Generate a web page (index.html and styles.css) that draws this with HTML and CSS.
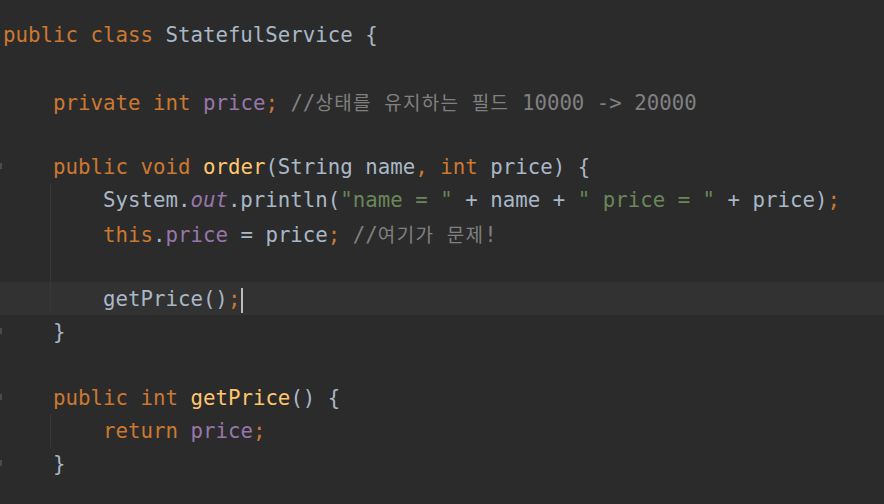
FILE: index.html
```html
<!DOCTYPE html>
<html lang="ko">
<head>
<meta charset="utf-8">
<title>StatefulService</title>
<link rel="stylesheet" href="styles.css">
</head>
<body>
<main class="editor">
<div class="line"><span class="kw">public class</span> StatefulService {</div>
<div class="line"></div>
<div class="line">    <span class="kw">private int</span> <span class="fld">price</span><span class="kw">;</span> <span class="cm">//<span class="ko">상태를</span> <span class="ko">유지하는</span> <span class="ko">필드</span> 10000 -&gt; 20000</span></div>
<div class="line"></div>
<div class="line fold">    <span class="kw">public void</span> <span class="fn">order</span>(String name<span class="kw">,</span> <span class="kw">int</span> price) {</div>
<div class="block">
<div class="line">        System.<span class="fld it">out</span>.println(<span class="str">"name = "</span> + name + <span class="str">" price = "</span> + price)<span class="kw">;</span></div>
<div class="line">        <span class="kw">this</span>.<span class="fld">price</span> = price<span class="kw">;</span> <span class="cm">//<span class="ko">여기가</span> <span class="ko">문제</span>!</span></div>
<div class="line"></div>
<div class="line current">        getPrice()<span class="kw">;</span><span class="caret"></span></div>
</div>
<div class="line fold">    }</div>
<div class="line"></div>
<div class="line fold">    <span class="kw">public int</span> <span class="fn">getPrice</span>() {</div>
<div class="block">
<div class="line">        <span class="kw">return</span> <span class="fld">price</span><span class="kw">;</span></div>
</div>
<div class="line fold">    }</div>
</main>
</body>
</html>
```
FILE: styles.css
```css
html, body {
  margin: 0;
  padding: 0;
  background: #2b2b2b;
}

.editor {
  width: 884px;
  height: 504px;
  overflow: hidden;
  padding-top: 18px;
  box-sizing: border-box;
  font-family: "DejaVu Sans Mono", "Liberation Mono", "Noto Sans CJK KR", monospace;
  font-size: 20.76px;
  color: #a9b7c6;
}

.line {
  position: relative;
  height: 33px;
  line-height: 35px;
  padding-left: 3px;
  white-space: pre;
}

.line.current {
  background: #323232;
}

.block {
  position: relative;
}

.block::before {
  content: "";
  position: absolute;
  left: 50px;
  top: 0;
  bottom: 0;
  width: 1px;
  background: #383838;
  z-index: 1;
}

.fold::before {
  content: "";
  position: absolute;
  left: 0;
  top: 13px;
  width: 2px;
  height: 6px;
  background: #4b4b4b;
}

.kw { color: #cc7832; }
.fn { color: #ffc66d; }
.fld { color: #9876aa; }
.it { font-style: italic; }
.str { color: #6a8759; }
.cm { color: #808080; }

.ko {
  font-family: "Noto Sans CJK KR", sans-serif;
  font-size: 19px;
  letter-spacing: 1.3px;
}

.caret {
  display: inline-block;
  width: 2px;
  height: 25px;
  background: #bbbbbb;
  vertical-align: middle;
  margin-left: 1px;
}
```
